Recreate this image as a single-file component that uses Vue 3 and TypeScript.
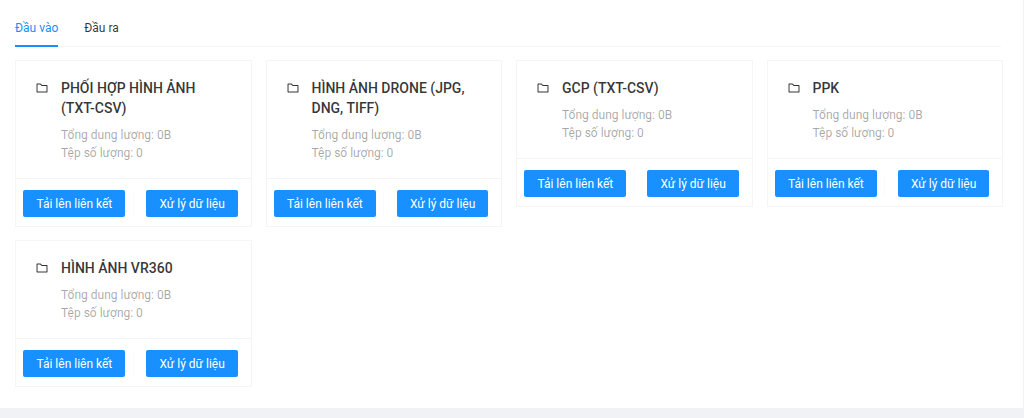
<template>
  <div class="page">
    <div class="content">
      <div class="tabs">
        <div
          v-for="(tab, i) in tabs"
          :key="tab"
          class="tab"
          :class="{ active: i === 0 }"
        >
          {{ tab }}
        </div>
      </div>
      <div class="grid">
        <div v-for="card in cards" :key="card" class="card">
          <div class="card-body">
            <svg class="folder" viewBox="0 0 1024 1024" width="14" height="14" aria-hidden="true">
              <path d="M880 298.4H521L403.7 186.2a8.15 8.15 0 0 0-5.5-2.2H144c-17.7 0-32 14.3-32 32v592c0 17.7 14.3 32 32 32h736c17.7 0 32-14.3 32-32V330.4c0-17.7-14.3-32-32-32zM840 768H184V256h188.5l119.6 114.4H840V768z" />
            </svg>
            <div class="info">
              <div class="title">{{ card }}</div>
              <div class="meta">Tổng dung lượng: 0B</div>
              <div class="meta">Tệp số lượng: 0</div>
            </div>
          </div>
          <div class="actions">
            <div class="action left"><button class="btn">Tải lên liên kết</button></div>
            <div class="action right"><button class="btn">Xử lý dữ liệu</button></div>
          </div>
        </div>
      </div>
    </div>
  </div>
</template>

<script setup lang="ts">
const tabs: string[] = ['Đầu vào', 'Đầu ra']
const cards: string[] = [
  'PHỐI HỢP HÌNH ẢNH (TXT-CSV)',
  'HÌNH ẢNH DRONE (JPG, DNG, TIFF)',
  'GCP (TXT-CSV)',
  'PPK',
  'HÌNH ẢNH VR360',
]
</script>

<style>
html,
body {
  margin: 0;
  background: #f0f2f5;
}
</style>

<style scoped>
.page {
  height: 418px;
  overflow: hidden;
  font-family: Roboto, 'Noto Sans', sans-serif;
  font-size: 12px;
}
.content {
  height: 408px;
  box-sizing: border-box;
  margin-right: 1px;
  padding: 10px 20px 0 15px;
  background: #fff;
}
.tabs {
  display: flex;
  gap: 26px;
  height: 36px;
  border-bottom: 1px solid #f5f5f5;
  margin-right: 2px;
}
.tab {
  height: 37px;
  box-sizing: border-box;
  padding-top: 9px;
  line-height: 18px;
  color: rgba(0, 0, 0, 0.8);
}
.tab.active {
  color: #1890ff;
  border-bottom: 2px solid #1890ff;
}
.grid {
  display: grid;
  grid-template-columns: repeat(4, 1fr);
  column-gap: 14px;
  row-gap: 13px;
  margin-top: 13px;
  align-items: start;
}
.card {
  border: 1px solid #f5f5f5;
  background: #fff;
}
.card-body {
  display: flex;
  padding: 17px 24px 16px 19px;
}
.folder {
  flex: none;
  margin-top: 3px;
  margin-right: 12px;
  fill: rgba(0, 0, 0, 0.8);
}
.title {
  font-size: 14px;
  font-weight: 500;
  line-height: 20px;
  color: rgba(0, 0, 0, 0.8);
  margin-bottom: 8px;
}
.meta {
  line-height: 18px;
  color: rgba(0, 0, 0, 0.35);
}
.actions {
  display: flex;
  border-top: 1px solid #f5f5f5;
  padding: 11px 0 9px;
}
.action {
  flex: 1;
  display: flex;
  justify-content: center;
}
.left {
  border-right: 1px solid #fbfbfb;
}
.btn {
  height: 27px;
  padding: 0 13px;
  border: 0;
  border-radius: 2px;
  background: #1890ff;
  color: #fff;
  font: inherit;
  white-space: nowrap;
}
</style>
